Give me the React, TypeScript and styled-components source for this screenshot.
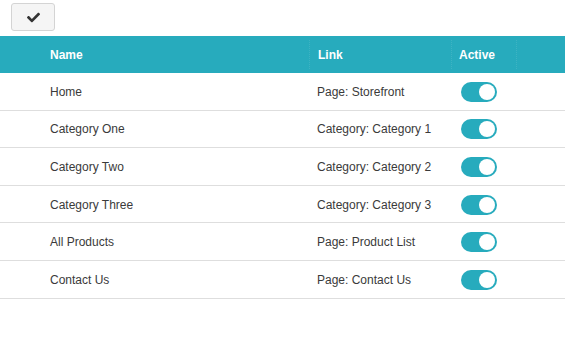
import React from "react";
import styled, { createGlobalStyle } from "styled-components";
import { FaCheck } from "react-icons/fa";

const GlobalStyle = createGlobalStyle`
  body {
    margin: 0;
    background: #fff;
    font-family: "Liberation Sans", Arial, sans-serif;
    font-size: 12px;
    color: #3a3a3a;
  }
`;

const Toolbar = styled.div`
  height: 36px;
  padding: 3px 0 0 11px;
  box-sizing: border-box;
`;

const SaveButton = styled.button`
  width: 44px;
  height: 28px;
  border: 1px solid #d4d4d4;
  border-radius: 3px;
  background: #f5f5f5;
  color: #333;
  display: flex;
  align-items: center;
  justify-content: center;
  padding: 0;
  cursor: pointer;
`;

const cols = "42px 267px 142px 65px 1fr";

const HeaderRow = styled.div`
  display: grid;
  grid-template-columns: ${cols};
  height: 37px;
  background: #27abbd;
  color: #fff;
  font-weight: bold;
`;

const HeadCell = styled.div<{ $divider?: boolean; $pad?: number }>`
  display: flex;
  align-items: center;
  padding-left: ${(p) => p.$pad ?? 8}px;
  border-left: ${(p) => (p.$divider ? "1px dotted rgba(255,255,255,0.1)" : "none")};
  margin: 4px 0;
`;

const Row = styled.div`
  display: grid;
  grid-template-columns: ${cols};
  height: 37.6px;
  box-sizing: border-box;
  border-bottom: 1px solid #dedede;
`;

const Cell = styled.div<{ $pad?: number }>`
  display: flex;
  align-items: center;
  padding-left: ${(p) => p.$pad ?? 8}px;
  padding-top: 1px;
`;

const Toggle = styled.span<{ $on: boolean }>`
  position: relative;
  width: 36px;
  height: 20px;
  border-radius: 10px;
  background: ${(p) => (p.$on ? "#27abbd" : "#ccc")};
  display: inline-block;

  &::after {
    content: "";
    position: absolute;
    top: 2px;
    left: ${(p) => (p.$on ? "18px" : "2px")};
    width: 16px;
    height: 16px;
    border-radius: 50%;
    background: #fff;
  }
`;

const items = [
  { name: "Home", link: "Page: Storefront" },
  { name: "Category One", link: "Category: Category 1" },
  { name: "Category Two", link: "Category: Category 2" },
  { name: "Category Three", link: "Category: Category 3" },
  { name: "All Products", link: "Page: Product List" },
  { name: "Contact Us", link: "Page: Contact Us" },
];

const App: React.FC = () => {
  return (
    <>
      <GlobalStyle />
      <Toolbar>
        <SaveButton>
          <FaCheck size={13} />
        </SaveButton>
      </Toolbar>
      <HeaderRow>
        <HeadCell />
        <HeadCell>Name</HeadCell>
        <HeadCell $divider>Link</HeadCell>
        <HeadCell $divider $pad={7}>Active</HeadCell>
        <HeadCell $divider />
      </HeaderRow>
      {items.map((item) => (
        <Row key={item.name}>
          <Cell />
          <Cell>{item.name}</Cell>
          <Cell>{item.link}</Cell>
          <Cell $pad={10}>
            <Toggle $on />
          </Cell>
          <Cell />
        </Row>
      ))}
    </>
  );
};

export default App;
